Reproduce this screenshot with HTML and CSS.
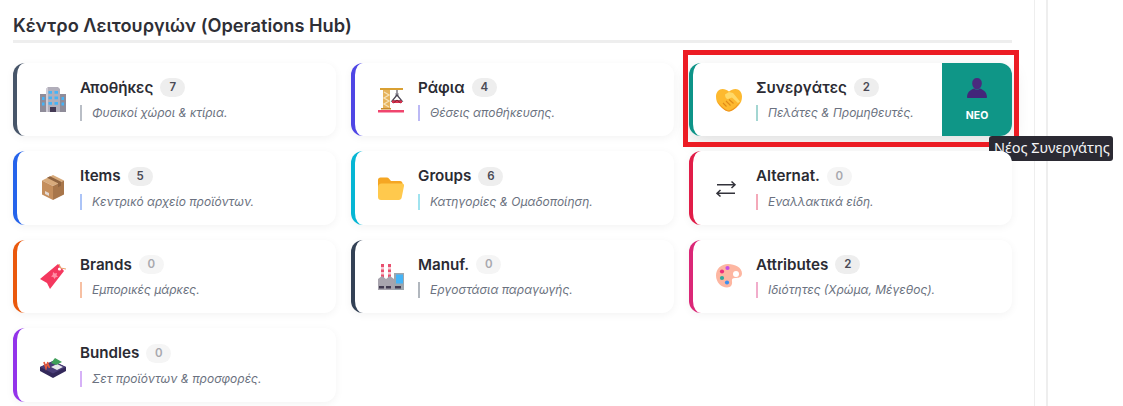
FILE: index.html
```html
<!DOCTYPE html>
<html lang="el">
<head>
<meta charset="utf-8">
<title>Κέντρο Λειτουργιών</title>
<link rel="stylesheet" href="styles.css">
</head>
<body>
<div class="page">
  <main class="main">
    <h2 class="heading">Κέντρο Λειτουργιών (Operations Hub)</h2>
    <div class="grid">
      <article class="card c-slate">
        <svg class="icon icon-left" viewBox="0 0 26 26"><path d="M0 7h7v18H0z" fill="#8f8c99"/><path d="M19 7h7v18h-7z" fill="#8f8c99"/><path d="M6 2l2-2h10l2 2v23H6z" fill="#b1aeba"/><path d="M6 2l2-2v25H6z" fill="#cfccd6"/><g fill="#45b4f7"><path d="M8.500 4h3.500v2.800H8.500zM14.500 4H18v2.800h-3.500zM8.500 9.500h3.500v2.800H8.500zM14.500 9.500H18v2.800h-3.500zM8.500 15h3.500v2.800H8.500zM14.500 15H18v2.800h-3.500z"/><path d="M2 10h2.500v3H2zM2 15.500h2.500v3H2zM21.500 10H24v3h-2.500zM21.500 15.500H24v3h-2.500z"/></g><path d="M10 20h6v5h-6z" fill="#443a54"/></svg>
        <div class="body">
          <div class="title-row"><h3 class="title">Αποθήκες</h3><span class="badge">7</span></div>
          <p class="sub">Φυσικοί χώροι &amp; κτίρια.</p>
        </div>
      </article>
      <article class="card c-indigo">
        <svg class="icon" viewBox="0 0 26 26"><path d="M2 1h23v2H2z" fill="#d9a033"/><path d="M5 3h7v19H5z" fill="#e6b35c"/><path d="M6 5l5 3-5 3 5 3-5 3 5 3" fill="none" stroke="#f7e2b8" stroke-width="1.300"/><path d="M3 21h10v1.500H3z" fill="#c98a2b"/><path d="M0 23h26v2.500H0z" fill="#f0456e"/><path d="M19 3v5" stroke="#5b5866" stroke-width="1.200"/><path d="M17.500 6h3v3h-3z" fill="#8c8a96"/><path d="M19 8l-5 6h10z" fill="none" stroke="#4a4654" stroke-width="1.300"/><path d="M14 13.500h10V16H14z" fill="#d9324f"/><path d="M15.500 16l3.500-3 3.500 3" fill="none" stroke="#8a1f33" stroke-width="1"/></svg>
        <div class="body">
          <div class="title-row"><h3 class="title">Ράφια</h3><span class="badge">4</span></div>
          <p class="sub">Θέσεις αποθήκευσης.</p>
        </div>
      </article>
      <article class="card c-teal card-active">
        <svg class="icon" viewBox="0 0 26 26"><path d="M13 24.500c-3 0-6-2.500-9.500-6C1 16 0 13 0 9.500 0 5 3 2 6.500 2 9 2 11 3 13 4.500 15 3 17 2 19.500 2 23 2 26 5 26 9.500c0 3.500-1 6.500-3.500 9-3.500 3.500-6.500 6-9.500 6z" fill="#fdb92f"/><path d="M1 14c3 4 7 8 11 9.500 3 .5 8-3.500 12-9-2 4-3 5-5 7-2.500 2-4.500 3-6 3-4 0-9-5-12-10.500z" fill="#ee9320"/><path d="M9 7.500L13 5l4 1 7 8.500-2 1.500-6-5.500-4 1.500c-2 .5-3-2.500-3-4.500z" fill="#ffd968"/><path d="M7 16l3.500 3.500M10 14l4.500 4.500M13 12.500l4.500 4" stroke="#e08a18" stroke-width="1.100" fill="none"/></svg>
        <div class="body">
          <div class="title-row"><h3 class="title">Συνεργάτες</h3><span class="badge">2</span></div>
          <p class="sub">Πελάτες &amp; Προμηθευτές.</p>
        </div>
        <div class="action">
          <svg class="action-icon" viewBox="0 0 20 20"><path d="M10 0c3 0 4.800 2 4.800 5 0 3.500-2 6.500-4.800 6.500S5.200 8.500 5.200 5C5.200 2 7 0 10 0z" fill="#4a2a7e"/><path d="M7 10.500c1.800 1.800 4.200 1.800 6 0 3.500 1.500 6.500 3 7 8.500 0 .6-.4 1-1 1H1c-.6 0-1-.4-1-1 .5-5.500 3.500-7 7-8.500z" fill="#43267a"/></svg>
          <span class="action-label">NEO</span>
        </div>
        <div class="highlight"></div>
        <div class="tooltip">Νέος Συνεργάτης</div>
      </article>
      <article class="card c-blue">
        <svg class="icon" viewBox="0 0 26 26"><path d="M13 0l11 5.500L13 11 2 5.500z" fill="#d8ab7c"/><path d="M2 5.500L13 11v14L2 19.500z" fill="#c48e5c"/><path d="M24 5.500L13 11v14l11-5.500z" fill="#a8764a"/><path d="M7 2.800l11 5.500v4l3-1.500V6.800L10 1.300z" fill="#8f6440"/><path d="M5 16l4 2v3l-4-2z" fill="#e5d8d0"/></svg>
        <div class="body">
          <div class="title-row"><h3 class="title">Items</h3><span class="badge">5</span></div>
          <p class="sub">Κεντρικό αρχείο προϊόντων.</p>
        </div>
      </article>
      <article class="card c-cyan">
        <svg class="icon" viewBox="0 0 26 26"><path d="M0 5c0-1.500 1-2.500 2.500-2.500h6.300c1 0 1.700.4 2.300 1.200L13 6h9c1.500 0 2.500 1 2.500 2.500V12H0z" fill="#f5a623"/><path d="M0 22V12c.3-2 1.500-3.500 3.500-3.500H24c1.500 0 2.300 1.200 2 2.500l-2.300 11.500c-.3 1.500-1.300 2.500-3 2.500H3c-2 0-3-1-3-3z" fill="#ffc94d"/></svg>
        <div class="body">
          <div class="title-row"><h3 class="title">Groups</h3><span class="badge">6</span></div>
          <p class="sub">Κατηγορίες &amp; Ομαδοποίηση.</p>
        </div>
      </article>
      <article class="card c-rose">
        <svg class="icon" viewBox="0 0 26 26"><path d="M1 9.700h18M15.500 6.500L19 9.700 15.500 13M19 18.300H1M4.500 15L1 18.300l3.500 3.200" fill="none" stroke="#33333b" stroke-width="1.500"/></svg>
        <div class="body">
          <div class="title-row"><h3 class="title">Alternat.</h3><span class="badge badge-zero">0</span></div>
          <p class="sub">Εναλλακτικά είδη.</p>
        </div>
      </article>
      <article class="card c-orange">
        <svg class="icon" viewBox="0 0 26 26"><path d="M0 15L18 0l6 7-14 18-3-6z" fill="#f4385f"/><path d="M13 8l1.800 1.500L17 9l-.5 2.200 1.500 1.800-2.300.2L14.500 15l-1.200-2-2.300-.5 1.700-1.500z" fill="#ff8fa5"/><circle cx="19.500" cy="5" r="1.600" fill="#fff"/><path d="M19 0l1.500 4M20.500 4L26 5" stroke="#e8a06a" stroke-width="1.100" fill="none"/></svg>
        <div class="body">
          <div class="title-row"><h3 class="title">Brands</h3><span class="badge badge-zero">0</span></div>
          <p class="sub">Εμπορικές μάρκες.</p>
        </div>
      </article>
      <article class="card c-navy">
        <svg class="icon" viewBox="0 0 26 26"><path d="M3 0h3v14H3zM10 0h3v14h-3z" fill="#e9506f"/><path d="M3 3h3v2.500H3zM3 8h3v2.500H3zM10 3h3v2.500h-3zM10 8h3v2.500h-3z" fill="#f7c9d2"/><path d="M0 26V15l4-3 4 3 4-3 4 3V9h10v17z" fill="#a8a4ae"/><path d="M16 9h10v17H16z" fill="#9ea6ad"/><path d="M18 10.500h7v9h-7z" fill="#45b4f7"/><path d="M1 22h5v2.500H1zM8 22h5v2.500H8zM17 22h6v2.500h-6z" fill="#433b52"/></svg>
        <div class="body">
          <div class="title-row"><h3 class="title">Manuf.</h3><span class="badge badge-zero">0</span></div>
          <p class="sub">Εργοστάσια παραγωγής.</p>
        </div>
      </article>
      <article class="card c-pink">
        <svg class="icon" viewBox="0 0 26 26"><path d="M12 0c7 0 14 3.500 14 9.500 0 4-4 4.500-7 4.500-2.500 0-3.500 1-3 3.500.5 3-1 6-5 6C5 23.500 0 18 0 11.500 0 5 5 0 12 0z" fill="#fdb6a1"/><circle cx="20" cy="10" r="3" fill="#fff"/><circle cx="11.500" cy="4" r="2.100" fill="#c44fe8"/><circle cx="6" cy="7.500" r="2.100" fill="#ee2f7b"/><circle cx="6" cy="14" r="2.100" fill="#2fa89a"/><circle cx="11" cy="18.500" r="2.100" fill="#3b8fee"/></svg>
        <div class="body">
          <div class="title-row"><h3 class="title">Attributes</h3><span class="badge">2</span></div>
          <p class="sub">Ιδιότητες (Χρώμα, Μέγεθος).</p>
        </div>
      </article>
      <article class="card c-purple">
        <svg class="icon" viewBox="0 0 26 26"><path d="M0 15l13-6 13 6v4l-13 7-13-7z" fill="#33285a"/><path d="M0 15l13 6.500L26 15l-13-6z" fill="#4a3d78"/><path d="M11 15l6-3 6 3-6 3z" fill="#e8e8ec"/><path d="M11 11l4-5 7 4-6 3z" fill="#3f9f5a"/><path d="M4 10l2 6 2-6M7.500 11l2 5" stroke="#e85a3c" stroke-width="1.700" fill="none"/></svg>
        <div class="body">
          <div class="title-row"><h3 class="title">Bundles</h3><span class="badge badge-zero">0</span></div>
          <p class="sub">Σετ προϊόντων &amp; προσφορές.</p>
        </div>
      </article>
    </div>
  </main>
  <div class="gutter"></div>
  <aside class="side"></aside>
</div>
</body>
</html>
```
FILE: styles.css
```css
* { box-sizing: border-box; }
html, body { margin: 0; height: 100%; }
body { background: #fff; font-family: Inter, "Noto Sans", sans-serif; color: #2b2b33; overflow: hidden; }
.page { display: flex; height: 406px; }
.main { width: 1035px; padding: 15px 22px 0 13px; border-right: 1px solid #eee; }
.gutter { width: 11px; }
.side { flex: 1; border-left: 2px solid #eee; }
.heading { margin: 0; padding-bottom: 3px; font-size: 18.200px; font-weight: 600; line-height: 20px; border-bottom: 3px solid #eee; color: #2f2f36; box-sizing: content-box; height: 22px; }
.grid { display: grid; grid-template-columns: repeat(3, 323px); grid-auto-rows: 73.5px; gap: 15px; margin-top: 19.500px; }
.card { --c: #475569; position: relative; display: flex; gap: 14px; padding: 15.500px 0 0 23px; background: #fff; border-left: 4px solid var(--c); border-radius: 12px; box-shadow: 0 2px 8px rgba(0, 0, 0, .05); }
.c-slate { --c: #475569; }
.c-indigo { --c: #4f46e5; }
.c-teal { --c: #0d9488; }
.c-blue { --c: #2563eb; }
.c-cyan { --c: #06b6d4; }
.c-rose { --c: #e11d48; }
.c-orange { --c: #ea580c; }
.c-navy { --c: #334155; }
.c-pink { --c: #db2777; }
.c-purple { --c: #9333ea; }
.card-active { box-shadow: 0 6px 18px rgba(0, 0, 0, .13); }
.icon { width: 26px; height: 26px; margin-top: 8.500px; flex: none; }
.body { min-width: 0; }
.title-row { display: flex; align-items: center; gap: 7px; height: 19px; }
.title { margin: -1px 0 0; font-size: 15.200px; font-weight: 600; line-height: 19px; color: #2b2b33; }
.badge { height: 19px; min-width: 25px; padding: 0 8px; border-radius: 10px; background: #eee; color: #4a4a55; font-size: 11.500px; font-weight: 600; line-height: 19px; text-align: center; }
.badge-zero { background: #f5f5f5; color: #a8a8ae; }
.sub { margin: 8px 0 0; height: 16px; padding-left: 10px; border-left: 2px solid color-mix(in srgb, var(--c) 38%, #fff); font-size: 12px; font-style: italic; line-height: 16px; color: #6b7280; white-space: nowrap; }
.action { position: absolute; top: 0; right: 0; bottom: 0; width: 70px; display: flex; flex-direction: column; align-items: center; padding-top: 15px; background: #0f9687; border-radius: 0 12px 12px 0; }
.action-icon { width: 20px; height: 20px; }
.action-label { margin-top: 11px; font-size: 10.500px; font-weight: 700; line-height: 13px; color: #fff; }
.highlight { position: absolute; left: -10px; top: -13px; right: -7px; bottom: -11px; border: 5px solid #ec1c24; pointer-events: none; }
.tooltip { position: absolute; left: 296px; top: 73.500px; width: 124px; height: 25px; padding-left: 5px; background: #2b2a33; border-radius: 3px; color: #f4f4f6; font-family: "Noto Sans", sans-serif; font-size: 14.500px; line-height: 23px; white-space: nowrap; }
```
